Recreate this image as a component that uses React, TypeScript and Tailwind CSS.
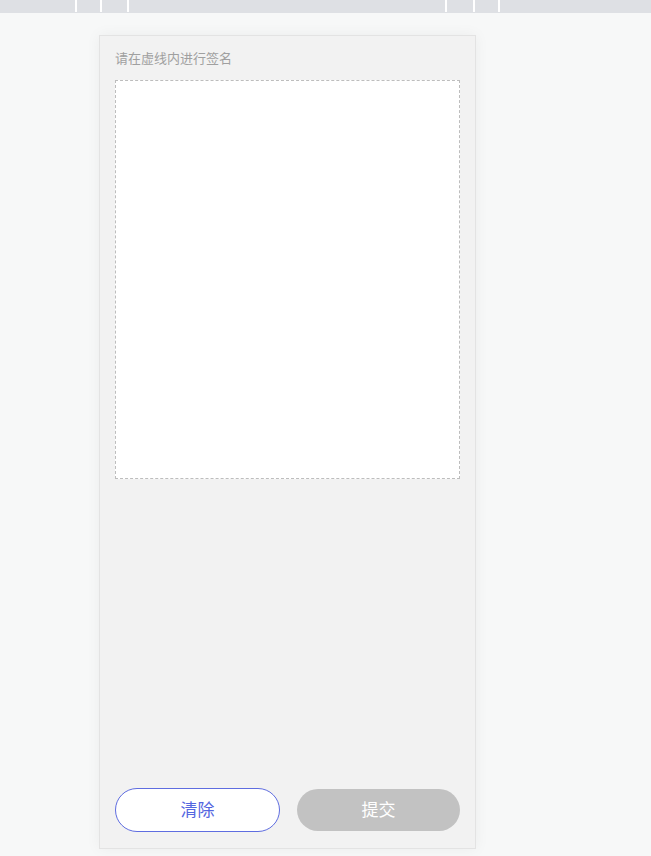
import React from "react";

const font = {
  fontFamily: '"Noto Sans CJK SC", "Noto Sans", sans-serif',
};

const TopBar = () => {
  return (
    <div className="flex h-[13px] bg-[#dee0e4]">
      <div className="w-[75px]" />
      <div className="w-[2px] h-[12px] bg-white" />
      <div className="w-[23px]" />
      <div className="w-[2px] h-[12px] bg-white" />
      <div className="w-[25px]" />
      <div className="w-[2px] h-[12px] bg-white" />
      <div className="w-[316px]" />
      <div className="w-[2px] h-[12px] bg-white" />
      <div className="w-[26px]" />
      <div className="w-[2px] h-[12px] bg-white" />
      <div className="w-[23px]" />
      <div className="w-[2px] h-[12px] bg-white" />
    </div>
  );
};

export default function App() {
  return (
    <div className="min-h-[856px] bg-[#f7f8f8]" style={font}>
      <TopBar />
      <div className="ml-[99px] mt-[22px] w-[377px] h-[814px] flex flex-col bg-[#f2f2f2] border border-[#e3e3e3] shadow-[0_0_14px_rgba(0,0,0,0.05)] px-[15px] pt-[12px] pb-[16px]">
        <p className="text-[13px] leading-[20px] text-[#a0a0a0]">请在虚线内进行签名</p>
        <div className="mt-[12px] w-[345px] h-[399px] bg-white border border-dashed border-[#bdbdbd]" />
        <div className="mt-auto flex items-center justify-between">
          <button className="w-[165px] h-[44px] rounded-full bg-white border border-[#5f6de0] text-[#5466e0] text-[17px] leading-none pb-[3px]">
            清除
          </button>
          <button className="w-[163px] h-[42px] rounded-full bg-[#c2c2c2] text-white text-[17px] leading-none pb-[3px]">
            提交
          </button>
        </div>
      </div>
    </div>
  );
}
